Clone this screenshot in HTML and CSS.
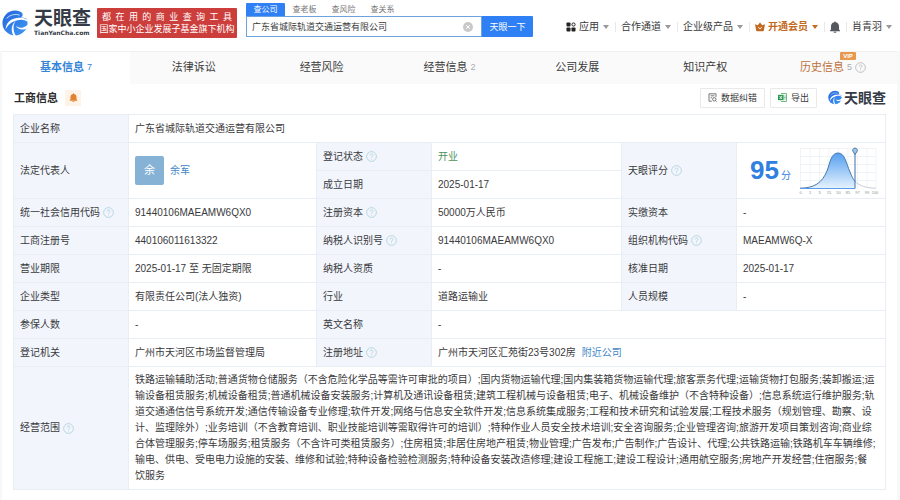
FILE: index.html
```html
<!DOCTYPE html>
<html lang="zh-CN">
<head>
<meta charset="utf-8">
<meta name="viewport" content="width=device-width, initial-scale=1">
<title>广东省城际轨道交通运营有限公司 - 天眼查</title>
<link rel="stylesheet" href="styles.css">
</head>
<body>
<svg class="sprite" aria-hidden="true">
  <defs>
    <linearGradient id="logo-fill" x1="0" y1="0" x2="1" y2="1">
      <stop offset="0" stop-color="#2563dd"/>
      <stop offset="1" stop-color="#3f9bf5"/>
    </linearGradient>
    <linearGradient id="curve-fill" x1="0" y1="0" x2="0" y2="1">
      <stop offset="0" stop-color="#559ff0"/>
      <stop offset="1" stop-color="#e6f2fe"/>
    </linearGradient>
  </defs>
  <symbol id="logo" viewBox="0 0 28 28">
    <circle cx="14" cy="14" r="13.500" fill="url(#logo-fill)"/>
    <path fill="#fff" d="M4 21C4 14 9 9.500 16 8.500C20 8 24 8 28 11L28 13C24 10 20 10 17 11C11 12 6 16 4 21Z"/>
    <path fill="#fff" d="M16 10.500C12 14 11 21 15 28H12.500C9 22 10 15 16 10.500Z"/>
    <path fill="#fff" d="M15 17C18 20 23 20 28 15.500V19C23 22.500 17 21.500 15 17Z"/>
    <path fill="#fff" d="M20 1C24 3 27 6 28 10C25 8.500 23 8 20 8C23 7 23 4 20 1Z"/>
    <path fill="none" stroke="#fff" stroke-width="0.800" d="M5 9C9 5 14 4 19 5.500"/>
  </symbol>
  <symbol id="help" viewBox="0 0 12 12">
    <circle cx="6" cy="6" r="5.3" fill="none" stroke="currentColor" stroke-width="1"/>
    <path d="M4.4 4.8C4.4 2.7 7.7 2.8 7.6 4.8C7.6 5.8 6 6 6 7.3M6 8.3V9.2" fill="none" stroke="currentColor" stroke-width="1"/>
  </symbol>
  <symbol id="bell" viewBox="0 0 12 12">
    <path fill="currentColor" d="M5.2 1.2a.8.8 0 0 1 1.6 0C9 1.7 10 3.3 10 5.3V8.4L11 9.6V10.2H1V9.6L2 8.4V5.3C2 3.3 3 1.7 5.2 1.2ZM4.4 10.7H7.6C7.3 12.2 4.7 12.2 4.4 10.7Z"/>
  </symbol>
</svg>

<header class="topbar">
  <a class="brand" href="#" aria-label="天眼查">
    <svg class="brand-mark"><use href="#logo"/></svg>
    <span class="brand-text">
      <span class="brand-name">天眼查</span>
      <span class="brand-site">TianYanCha.com</span>
    </span>
  </a>
  <p class="slogan">
    <span class="slogan-spread">都 在 用 的 商 业 查 询 工 具</span>
    <span>国家中小企业发展子基金旗下机构</span>
  </p>
  <form class="search">
    <div class="search-types">
      <button type="button" class="type type-active">查公司</button>
      <button type="button" class="type">查老板</button>
      <button type="button" class="type">查风险</button>
      <button type="button" class="type">查关系</button>
    </div>
    <div class="search-row">
      <div class="search-box">
        <input class="search-input" type="text" aria-label="搜索公司" value="广东省城际轨道交通运营有限公司">
        <button class="clear" type="button" aria-label="清空">
          <svg viewBox="0 0 10 10"><circle cx="5" cy="5" r="5" fill="#c8c8c8"/><path d="M3.2 3.2L6.8 6.8M6.8 3.2L3.2 6.8" stroke="#fff" stroke-width="1"/></svg>
        </button>
      </div>
      <button class="submit" type="submit">天眼一下</button>
    </div>
  </form>
  <nav class="menu">
    <a href="#" class="menu-item">
      <svg class="menu-icon" viewBox="0 0 10 10"><g fill="#222"><rect x="0.5" y="0.5" width="4" height="4" rx="0.8"/><rect x="0.5" y="5.5" width="4" height="4" rx="0.8"/><rect x="5.5" y="5.5" width="4" height="4" rx="0.8"/></g><circle cx="7.5" cy="2.5" r="1.6" fill="none" stroke="#222" stroke-width="1"/></svg>
      应用<i class="caret"></i></a>
    <a href="#" class="menu-item">合作通道<i class="caret"></i></a>
    <a href="#" class="menu-item">企业级产品<i class="caret"></i></a>
    <a href="#" class="menu-item menu-vip">
      <svg class="menu-icon" viewBox="0 0 10 10"><path fill="currentColor" fill-rule="evenodd" d="M0 2.2L2.7 3.3L5 .6L7.3 3.3L10 2.2L8.9 8.2Q8.8 9.2 7.8 9.2H2.2Q1.2 9.2 1.1 8.2ZM3 5.2Q5 8.8 7 5.2L6.3 4.9Q5 7 3.7 4.9Z"/></svg>
      开通会员<i class="caret"></i></a>
    <a href="#" class="menu-item menu-bell" aria-label="消息"><svg class="menu-icon" viewBox="1 0 10 12"><use href="#bell" width="12" height="12"/></svg></a>
    <a href="#" class="menu-item">肖青羽<i class="caret"></i></a>
  </nav>
</header>

<main class="page">
  <nav class="tabs">
    <a href="#" class="tab tab-active">基本信息<span class="count">7</span></a>
    <a href="#" class="tab">法律诉讼</a>
    <a href="#" class="tab">经营风险</a>
    <a href="#" class="tab">经营信息<span class="count">2</span></a>
    <a href="#" class="tab">公司发展</a>
    <a href="#" class="tab">知识产权</a>
    <a href="#" class="tab tab-history">历史信息<span class="count">5<span class="vip">VIP</span></span><svg class="help"><use href="#help"/></svg></a>
  </nav>

  <section class="section">
    <div class="section-head">
      <h1 class="title">工商信息</h1>
      <button class="remind" type="button" aria-label="提醒"><svg><use href="#bell"/></svg></button>
      <div class="actions">
        <button class="action" type="button">
          <svg viewBox="0 0 9 9" fill="none" stroke="#555" stroke-width="0.8"><path d="M8 4V.8H1V8.2H3.8M2.6 2.8H6.4M2.6 4.8H4.2"/><circle cx="6.3" cy="6.3" r="1.7"/><path d="M7.5 7.5L8.6 8.6"/></svg>
          数据纠错
        </button>
        <button class="action" type="button">
          <svg viewBox="0 0 9 9"><path d="M3 .5H8.5V8.5H3" fill="none" stroke="#4ea76a" stroke-width="0.8"/><path d="M6 3H8M6 4.5H8M6 6H8" stroke="#4ea76a" stroke-width="0.6"/><rect y="1.8" width="5.6" height="5.4" fill="#2f9a53"/><path d="M1.6 3L4 6M4 3L1.6 6" stroke="#fff" stroke-width="0.8"/></svg>
          导出
        </button>
        <span class="small-brand"><svg><use href="#logo"/></svg>天眼查</span>
      </div>
    </div>

    <table class="info">
      <colgroup>
        <col class="c-label"><col class="c-first"><col class="c-label"><col class="c-second"><col class="c-label"><col>
      </colgroup>
      <tbody>
        <tr><th scope="row">企业名称</th><td colspan="5">广东省城际轨道交通运营有限公司</td></tr>
        <tr>
          <th scope="row" rowspan="2">法定代表人</th>
          <td rowspan="2" class="flush"><div class="person"><span class="avatar">余</span><a href="#">余军</a></div></td>
          <th scope="row">登记状态<svg class="help"><use href="#help"/></svg></th><td class="open">开业</td>
          <th scope="row" rowspan="2">天眼评分<svg class="help"><use href="#help"/></svg></th>
          <td rowspan="2" class="flush">
            <div class="score">
              <span class="score-value"><strong>95</strong>分</span>
              <svg class="chart" viewBox="0 0 80 50" role="img" aria-label="评分分布">
                <path d="M1.500 2V42M11 2V42M20.500 2V42M30 2V42M39.500 2V42M49 2V42M58.500 2V42M68 2V42M77 2V42M1 2.500H77M1 10.500H77M1 18.500H77M1 26.500H77M1 34.500H77" stroke="#ebeff4" stroke-width="0.700" fill="none"/>
                <path d="M1 42.200C15 42.200 23 37 28 25C31 17 32 7 39 7C46 7 47 17 51 26C53 31 54 33 56 35.500V42.200Z" fill="url(#curve-fill)"/>
                <path d="M1 42.200C15 42.200 23 37 28 25C31 17 32 7 39 7C46 7 47 17 51 26C53 31 54 33 56 35.500" fill="none" stroke="#4679ab" stroke-width="1"/>
                <path d="M56 35.500C61 40 67 42 77 42.200" fill="none" stroke="#c7ced8" stroke-width="1"/>
                <path d="M1 42.500H56" stroke="#5a9cea" stroke-width="1"/>
                <path d="M56 6V42.500" stroke="#3d6fae" stroke-width="1"/>
                <path d="M56 8.500L54 5.500A2.300 2.300 0 1 1 58 5.500Z" fill="#9cc7f3" stroke="#3d6086" stroke-width="0.800"/>
                <g class="ticks"><text x="1.500" y="48">0</text><text x="11" y="48">1</text><text x="20.500" y="48">3</text><text x="30" y="48">15</text><text x="39.500" y="48">50</text><text x="49" y="48">85</text><text x="58.500" y="48">97</text><text x="68" y="48">99</text><text x="76" y="48">100</text></g>
              </svg>
            </div>
          </td>
        </tr>
        <tr><th scope="row">成立日期</th><td>2025-01-17</td></tr>
        <tr>
          <th scope="row">统一社会信用代码<svg class="help"><use href="#help"/></svg></th><td>91440106MAEAMW6QX0</td>
          <th scope="row">注册资本<svg class="help"><use href="#help"/></svg></th><td>50000万人民币</td>
          <th scope="row">实缴资本</th><td>-</td>
        </tr>
        <tr>
          <th scope="row">工商注册号</th><td>440106011613322</td>
          <th scope="row">纳税人识别号<svg class="help"><use href="#help"/></svg></th><td>91440106MAEAMW6QX0</td>
          <th scope="row">组织机构代码<svg class="help"><use href="#help"/></svg></th><td>MAEAMW6Q-X</td>
        </tr>
        <tr>
          <th scope="row">营业期限</th><td>2025-01-17 至 无固定期限</td>
          <th scope="row">纳税人资质</th><td>-</td>
          <th scope="row">核准日期</th><td>2025-01-17</td>
        </tr>
        <tr>
          <th scope="row">企业类型</th><td>有限责任公司(法人独资)</td>
          <th scope="row">行业</th><td>道路运输业</td>
          <th scope="row">人员规模</th><td>-</td>
        </tr>
        <tr>
          <th scope="row">参保人数</th><td>-</td>
          <th scope="row">英文名称</th><td colspan="3">-</td>
        </tr>
        <tr>
          <th scope="row">登记机关</th><td>广州市天河区市场监督管理局</td>
          <th scope="row">注册地址<svg class="help"><use href="#help"/></svg></th>
          <td colspan="3">广州市天河区汇苑街23号302房<a class="nearby" href="#">附近公司</a></td>
        </tr>
        <tr>
          <th scope="row">经营范围<svg class="help"><use href="#help"/></svg></th>
          <td colspan="5" class="scope">铁路运输辅助活动;普通货物仓储服务（不含危险化学品等需许可审批的项目）;国内货物运输代理;国内集装箱货物运输代理;旅客票务代理;运输货物打包服务;装卸搬运;运输设备租赁服务;机械设备租赁;普通机械设备安装服务;计算机及通讯设备租赁;建筑工程机械与设备租赁;电子、机械设备维护（不含特种设备）;信息系统运行维护服务;轨道交通通信信号系统开发;通信传输设备专业修理;软件开发;网络与信息安全软件开发;信息系统集成服务;工程和技术研究和试验发展;工程技术服务（规划管理、勘察、设计、监理除外）;业务培训（不含教育培训、职业技能培训等需取得许可的培训）;特种作业人员安全技术培训;安全咨询服务;企业管理咨询;旅游开发项目策划咨询;商业综合体管理服务;停车场服务;租赁服务（不含许可类租赁服务）;住房租赁;非居住房地产租赁;物业管理;广告发布;广告制作;广告设计、代理;公共铁路运输;铁路机车车辆维修;输电、供电、受电电力设施的安装、维修和试验;特种设备检验检测服务;特种设备安装改造修理;建设工程施工;建设工程设计;通用航空服务;房地产开发经营;住宿服务;餐饮服务</td>
        </tr>
      </tbody>
    </table>
  </section>
</main>
</body>
</html>
```
FILE: styles.css
```css
* {
  box-sizing: border-box;
}

body {
  margin: 0;
  background: #f7f8f9;
  color: #3a3a3c;
  font: 10px/16px "Liberation Sans", "Noto Sans CJK SC", sans-serif;
}

a {
  color: #3f86c6;
  text-decoration: none;
}

button,
input {
  padding: 0;
  border: 0;
  background: none;
  color: inherit;
  font: inherit;
}

svg {
  flex: none;
}

.sprite {
  position: absolute;
  width: 0;
  height: 0;
}

/* Header */
.topbar {
  display: flex;
  align-items: flex-start;
  height: 51px;
  padding: 0 8px 0 2px;
  background: #fff;
}

.brand {
  display: flex;
  align-items: center;
  gap: 6px;
  width: 95px;
  padding-top: 9px;
  color: #343b46;
}

.brand-mark {
  width: 26px;
  height: 28px;
}

.brand-text {
  display: flex;
  flex-direction: column;
}

.brand-name {
  font-size: 19px;
  font-weight: 700;
  line-height: 20px;
}

.brand-site {
  font: 700 6px/8px "DejaVu Sans", sans-serif;
}

.slogan {
  display: flex;
  flex-direction: column;
  width: 140px;
  margin: 8px 9px 0 0;
  padding: 3px 2px;
  border-radius: 1px;
  background: #cc3e3b;
  color: #fff;
  font-size: 9px;
  line-height: 12px;
  text-align: center;
  white-space: nowrap;
}

.slogan-spread {
  padding: 0 3px;
  text-align-last: justify;
}

.search {
  flex: 0 1 287px;
  padding-top: 3px;
}

.search-types {
  display: flex;
}

.type {
  width: 39px;
  height: 13px;
  color: #777;
  font-size: 8px;
  line-height: 13px;
}

.type-active {
  border-radius: 1px 1px 0 0;
  background: #2f80f5;
  color: #fff;
}

.search-row {
  display: flex;
  height: 21px;
}

.search-box {
  display: flex;
  flex: 1;
  align-items: center;
  padding: 0 8px 0 5px;
  border: 1px solid #6da3dc;
}

.search-input {
  flex: 1;
  min-width: 0;
  font-size: 9px;
  outline: 0;
}

.clear,
.clear svg {
  display: block;
  width: 10px;
  height: 10px;
}

.submit {
  width: 51px;
  border-radius: 0 1px 1px 0;
  background: #2f80f5;
  color: #fff;
  font-size: 9px;
}

.menu {
  display: flex;
  align-items: center;
  margin-left: auto;
  padding-top: 19px;
}

.menu-item {
  display: flex;
  align-items: center;
  padding: 0 6px;
  color: #3a3a3c;
  white-space: nowrap;
}

.menu-item + .menu-item {
  background: linear-gradient(#e8e8e8, #e8e8e8) left center / 1px 10px no-repeat;
}

.menu-icon {
  width: 10px;
  height: 10px;
  margin-right: 3px;
}

.menu-vip {
  color: #c26a21;
  font-weight: 700;
}

.menu-bell {
  color: #55585f;
}

.menu-bell .menu-icon {
  height: 12px;
  margin: 0;
}

.caret {
  margin-left: 4px;
  border: 3px solid transparent;
  border-top: 4px solid #999;
  border-bottom: 0;
}

.menu-vip .caret {
  border-top-color: #c26a21;
}

.menu-item:last-child {
  padding-right: 0;
}

/* Content */
.page {
  margin: 0 3px 0 2px;
  background: #fff;
}

.tabs {
  display: grid;
  grid-template-columns: repeat(7, 1fr);
  height: 33px;
  border-top: 1px solid #f0f0f0;
  background: #fafafa;
}

.tab {
  display: flex;
  align-items: center;
  justify-content: center;
  color: #3a3a3c;
  font-size: 11px;
  line-height: 18px;
  padding-bottom: 2px;
}

.tab-active {
  background: #fff;
  color: #3584d8;
  font-weight: 700;
}

.count {
  position: relative;
  margin-left: 3px;
  color: #aaa;
  font-size: 9px;
}

.tab-active .count {
  color: #3584d8;
  font-weight: 400;
}

.tab-history {
  color: #bd713c;
}

.vip {
  position: absolute;
  bottom: 16px;
  left: -7px;
  width: 16px;
  border-radius: 1px 1px 1px 0;
  background: #e79a4f;
  color: #fff;
  font-size: 6px;
  font-weight: 700;
  line-height: 8px;
  text-align: center;
}

.help {
  width: 11px;
  height: 11px;
  margin-left: 3px;
  color: #b3d2dd;
  vertical-align: middle;
}

.tab-history .help {
  color: #bbb;
}

.section {
  padding: 0 11px 11px;
}

.section-head {
  display: flex;
  align-items: center;
  height: 30px;
  padding: 0 0 3px 1px;
}

.title {
  margin: 0;
  color: #2c2c2e;
  font-size: 11px;
  font-weight: 700;
}

.remind {
  display: grid;
  place-items: center;
  width: 16px;
  height: 16px;
  margin-left: 7px;
  border-radius: 1px;
  background: #fdf3e8;
  color: #e2822f;
}

.remind svg {
  width: 9px;
  height: 9px;
}

.actions {
  display: flex;
  align-items: center;
  gap: 5px;
  margin-left: auto;
}

.action {
  display: flex;
  align-items: center;
  gap: 4px;
  height: 20px;
  padding: 0 7px;
  border: 1px solid #e9e9e9;
  border-radius: 1px;
  font-size: 9px;
}

.action svg {
  width: 9px;
  height: 9px;
}

.small-brand {
  display: flex;
  align-items: center;
  gap: 2px;
  margin-left: 6px;
  color: #343b46;
  font-size: 14px;
  font-weight: 700;
}

.small-brand svg {
  width: 14px;
  height: 15px;
}

/* Registration table */
.info {
  width: 100%;
  border-collapse: collapse;
  table-layout: fixed;
}

.c-label {
  width: 115px;
}

.c-first {
  width: 188px;
}

.c-second {
  width: 190px;
}

th,
td {
  height: 28px;
  padding: 5px 6px;
  border: 1px solid #e8eef3;
  text-align: left;
}

th {
  background: #f2f6fc;
  font-weight: 400;
}

.info .flush {
  padding-top: 0;
  padding-bottom: 0;
}

.person {
  display: flex;
  align-items: center;
  gap: 6px;
}

.avatar {
  width: 29px;
  border-radius: 2px;
  background: #86b2d6;
  color: #fff;
  font-size: 11px;
  line-height: 29px;
  text-align: center;
}

.open {
  color: #50915a;
}

.score {
  display: flex;
  align-items: center;
  justify-content: space-between;
  padding-left: 7px;
}

.score-value {
  color: #2f80df;
  line-height: 30px;
  padding-top: 4px;
}

.score-value strong {
  margin-right: 2px;
  font-size: 26px;
}

.chart {
  width: 80px;
  height: 50px;
}

.ticks {
  fill: #8a8f96;
  font-size: 4px;
  text-anchor: middle;
}

.nearby {
  margin-left: 6px;
}

.info .scope {
  height: 122px;
  padding-right: 9px;
}
```
